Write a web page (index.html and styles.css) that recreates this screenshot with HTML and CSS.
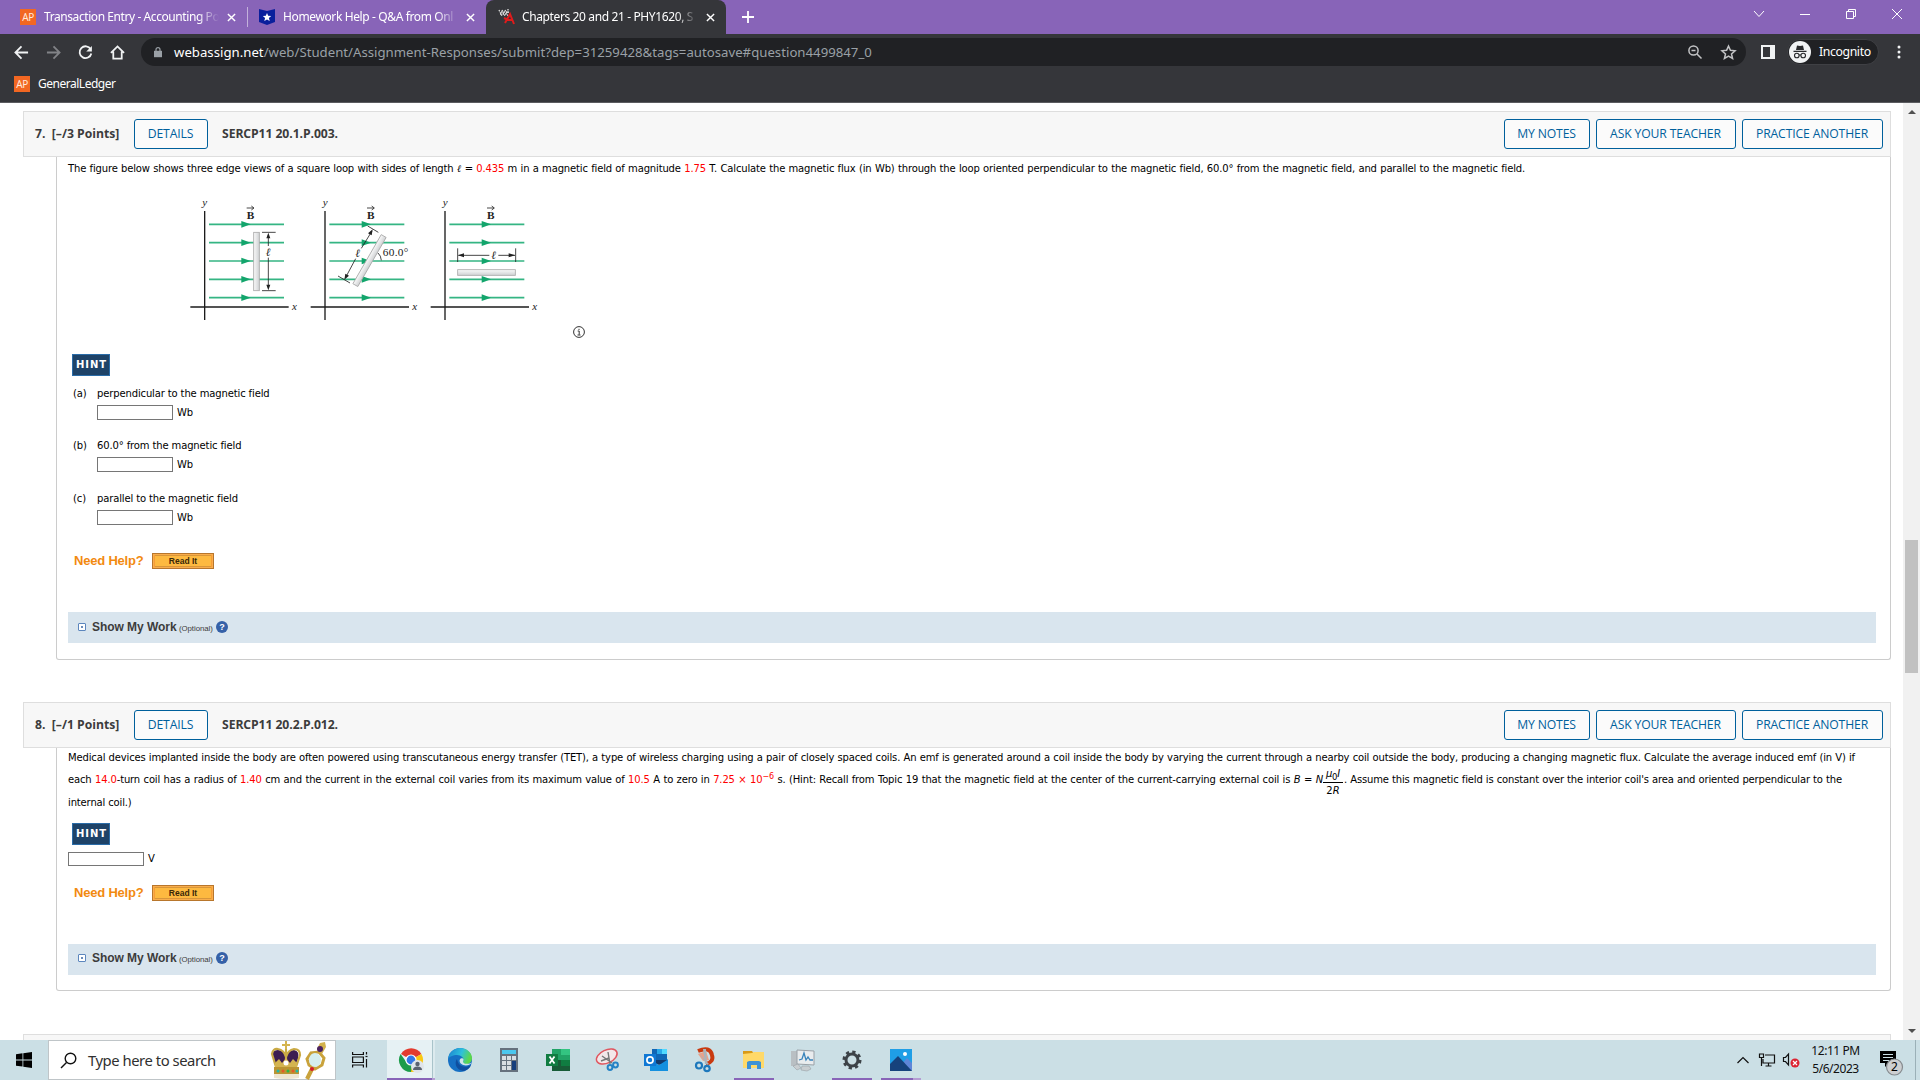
FILE: index.html
```html
<!DOCTYPE html>
<html lang="en">
<head>
<meta charset="utf-8">
<title>Chapters 20 and 21 - PHY1620</title>
<link rel="stylesheet" href="styles.css">
</head>
<body>
<header class="tabs">
  <div class="tab tab-one"><span class="ap">AP</span><span class="tab-title">Transaction Entry - Accounting Po</span><svg class="x" viewBox="0 0 10 10"><path d="M1 1l8 8M9 1l-8 8"/></svg></div>
  <div class="tab tab-two"><svg class="fav" viewBox="0 0 16 16"><path fill="#0a1f9c" d="M0 0l8 2 8-2v13l-8 3-8-3z"/><path fill="#fff" d="M8 4l1.2 2.8 3 .2-2.300 2 .8 3L8 10.400 5.300 12l.8-3-2.300-2 3-.2z"/></svg><span class="tab-title">Homework Help - Q&amp;A from Onl</span><svg class="x" viewBox="0 0 10 10"><path d="M1 1l8 8M9 1l-8 8"/></svg></div>
  <div class="tab tab-active"><svg class="fav" viewBox="0 0 16 16"><path fill="none" stroke="#ddd" stroke-dasharray="1.500 1" stroke-width="1.300" d="M0 1l3 6M3 1l3 6M6 1l3 6M9 0v4M1 5h7M2 3h8"/><path fill="none" stroke="#e01b1b" stroke-width="2" d="M6 14l5-9 4 10M8 11h5M5 9l4 2"/></svg><span class="tab-title">Chapters 20 and 21 - PHY1620, S</span><svg class="x" viewBox="0 0 10 10"><path d="M1 1l8 8M9 1l-8 8"/></svg></div>
  <svg class="plus" viewBox="0 0 12 12"><path d="M6 0v12M0 6h12"/></svg>
  <div class="window-controls">
    <svg viewBox="0 0 12 12"><path d="M1 3l5 5.500L11 3"/></svg>
    <svg viewBox="0 0 12 12"><path d="M1 6.500h10"/></svg>
    <svg viewBox="0 0 12 12"><path d="M1.500 3.500h7v7h-7zM3.500 3V1.500h7v7H9"/></svg>
    <svg viewBox="0 0 12 12"><path d="M1 1l10 10M11 1L1 11"/></svg>
  </div>
</header>
<div class="toolbar">
  <div class="nav">
    <svg viewBox="0 0 16 16"><path d="M15 8H2M8 1.500L1.500 8 8 14.500"/></svg>
    <svg class="dim" viewBox="0 0 16 16"><path d="M1 8h13M8 1.500L14.500 8 8 14.500"/></svg>
    <svg viewBox="0 0 16 16"><path d="M13.500 4.500A6.300 6.300 0 1 0 14.200 9"/><path class="solid" d="M14.800 1v6h-6z"/></svg>
    <svg viewBox="0 0 16 16"><path d="M1 8.500L8 1.500l7 7M3.500 7v7.500h9V7"/></svg>
  </div>
  <div class="omnibox">
    <svg class="lock" viewBox="0 0 10 13"><path fill="none" stroke="#9aa0a6" stroke-width="1.500" d="M2.500 6V3.500a2.500 2.500 0 0 1 5 0V6"/><path fill="#9aa0a6" d="M0 5h10v8H0z"/></svg>
    <span class="url"><b>webassign.net</b>/web/Student/Assignment-Responses/submit?dep=31259428&amp;tags=autosave#question4499847_0</span>
    <svg class="mag" viewBox="0 0 14 14"><circle cx="5.500" cy="5.500" r="4.600"/><path d="M9 9l4.500 4.500M3.500 5.500h4"/></svg>
    <svg class="star" viewBox="0 0 14 14"><path d="M7 1l1.800 4 4.300.4-3.300 2.900 1 4.300L7 10.300l-3.800 2.300 1-4.300L.9 5.400 5.200 5z"/></svg>
  </div>
  <svg class="panel" viewBox="0 0 14 14"><path fill="#f1f3f4" fill-rule="evenodd" d="M0 0h14v14H0zM2 2v10h7V2z"/></svg>
  <div class="incognito"><svg viewBox="0 0 22 22"><circle cx="11" cy="11" r="11" fill="#f1f3f4"/><path fill="#292a2d" d="M7 9l1-4.500 3 .6 3-.6L15 9zM4.500 9.800h13v1.200h-13z"/><g fill="none" stroke="#292a2d" stroke-width="1.100"><circle cx="7.800" cy="14.500" r="2.300"/><circle cx="14.200" cy="14.500" r="2.300"/><path d="M10 14h2"/></g></svg>Incognito</div>
  <svg class="dots" viewBox="0 0 4 14"><circle cx="2" cy="2" r="1.500"/><circle cx="2" cy="7" r="1.500"/><circle cx="2" cy="12" r="1.500"/></svg>
</div>
<div class="bookmarks"><span class="ap">AP</span>GeneralLedger</div>

<div class="viewport">
<main class="page">
  <section class="question q7">
    <div class="q-head">
      <span class="q-num">7.&nbsp; [–/3 Points]</span><span class="btn details">DETAILS</span><span class="q-code">SERCP11 20.1.P.003.</span>
      <span class="btn notes">MY NOTES</span><span class="btn ask">ASK YOUR TEACHER</span><span class="btn practice">PRACTICE ANOTHER</span>
    </div>
    <div class="q-body">
      <p class="line l1">The figure below shows three edge views of a square loop with sides of length <i class="ell">ℓ</i> = <em>0.435</em> m in a magnetic field of magnitude <em>1.75</em> T. Calculate the magnetic flux (in Wb) through the loop oriented perpendicular to the magnetic field, 60.0° from the magnetic field, and parallel to the magnetic field.</p>
      <div class="figure">
        <svg class="diagram" viewBox="0 0 1140 480">
          <defs>
            <linearGradient id="bar" x1="0" x2="1" y1="0" y2="0"><stop offset="0" stop-color="#fafafa"/><stop offset="1" stop-color="#cfd1d3"/></linearGradient>
            <linearGradient id="barh" x1="0" x2="0" y1="0" y2="1"><stop offset="0" stop-color="#fafafa"/><stop offset="1" stop-color="#cfd1d3"/></linearGradient>
            <g id="ray"><path stroke="#35b583" stroke-width="5" d="M0 0h225"/><path fill="#13a56c" d="M97-10l28 10-28 10z"/></g>
            <g id="axes">
              <path stroke="#1c1c1c" stroke-width="4" fill="none" d="M74 78v327M31 366h295"/>
              <use href="#ray" x="87" y="118"/><use href="#ray" x="87" y="173"/><use href="#ray" x="87" y="228"/><use href="#ray" x="87" y="283"/><use href="#ray" x="87" y="338"/>
              <text class="axis" x="67" y="63">y</text><text class="axis" x="336" y="375">x</text>
              <text class="vec" x="200" y="101">B</text>
              <path stroke="#222" stroke-width="2.500" fill="none" d="M200 69h20M214 63l8 6-8 6"/>
            </g>
          </defs>
          <use href="#axes"/><use href="#axes" x="361"/><use href="#axes" x="721"/>
          <rect x="221" y="142" width="17" height="175" fill="url(#bar)" stroke="#aaa" stroke-width="2.500"/>
          <g class="dim-line"><path d="M246 142h41M246 317h41M265 150v33M265 218v90"/><path class="tip" d="M265 143l-6 17h12zM265 316l-6-17h12z"/></g>
          <text class="dim-l" x="257" y="213">ℓ</text>
          <rect x="560" y="142" width="17" height="170" fill="url(#bar)" stroke="#aaa" stroke-width="2.500" transform="rotate(30 569 227)"/>
          <g class="dim-line"><path d="M563 123l32 19M474 273l36 21M576 138L544 190M527 221L496 279M594 204q9 8 10 22"/><path class="tip" d="M578 133l-14 12 11 6zM493 284l3-18 11 6z"/></g>
          <text class="dim-l" x="526" y="216">ℓ</text>
          <text class="angle" x="608" y="213">60.0°</text>
          <g class="dim-line"><path d="M833 190v41M1007 190v41M835 211h93M955 211h50"/><path class="tip" d="M834 211l18-6v12zM1006 211l-20-6v12z"/></g>
          <text class="dim-l" x="934" y="221">ℓ</text>
          <rect x="833" y="254" width="173" height="17" fill="url(#barh)" stroke="#aaa" stroke-width="2.500"/>
        </svg>
        <svg class="info" viewBox="0 0 12 12"><circle cx="6" cy="6" r="5.400"/><path d="M4.700 5h1.500v3.700M4.500 9h3M6 2.800v1.200"/></svg>
      </div>
      <span class="hint">HINT</span>
      <div class="part"><span>(a)</span><div><p>perpendicular to the magnetic field</p><label><input type="text">Wb</label></div></div>
      <div class="part"><span>(b)</span><div><p>60.0° from the magnetic field</p><label><input type="text">Wb</label></div></div>
      <div class="part"><span>(c)</span><div><p>parallel to the magnetic field</p><label><input type="text">Wb</label></div></div>
      <div class="help"><span>Need Help?</span><span class="read">Read It</span></div>
      <div class="work"><span class="expand"></span><b>Show My Work</b><small>(Optional)</small><span class="qmark">?</span></div>
    </div>
  </section>

  <section class="question q8">
    <div class="q-head">
      <span class="q-num">8.&nbsp; [–/1 Points]</span><span class="btn details">DETAILS</span><span class="q-code">SERCP11 20.2.P.012.</span>
      <span class="btn notes">MY NOTES</span><span class="btn ask">ASK YOUR TEACHER</span><span class="btn practice">PRACTICE ANOTHER</span>
    </div>
    <div class="q-body">
      <p class="line l2">Medical devices implanted inside the body are often powered using transcutaneous energy transfer (TET), a type of wireless charging using a pair of closely spaced coils. An emf is generated around a coil inside the body by varying the current through a nearby coil outside the body, producing a changing magnetic flux. Calculate the average induced emf (in V) if</p>
      <div class="row">
        <p class="line l3">each <em>14.0</em>-turn coil has a radius of <em>1.40</em> cm and the current in the external coil varies from its maximum value of <em>10.5</em> A to zero in <em>7.25 × 10<sup>−6</sup></em> s. (Hint: Recall from Topic 19 that the magnetic field at the center of the current-carrying external coil is <i>B</i> = <i>N</i></p>
        <span class="frac"><span><i>μ</i><sub>0</sub><i>I</i></span><span>2<i>R</i></span></span>
        <p class="line l4">. Assume this magnetic field is constant over the interior coil's area and oriented perpendicular to the</p>
      </div>
      <p class="line l5">internal coil.)</p>
      <span class="hint">HINT</span>
      <label class="answer"><input type="text">V</label>
      <div class="help"><span>Need Help?</span><span class="read">Read It</span></div>
      <div class="work"><span class="expand"></span><b>Show My Work</b><small>(Optional)</small><span class="qmark">?</span></div>
    </div>
  </section>
  <section class="question"><div class="q-head"></div></section>
</main>
<div class="scrollbar"><span class="up"></span><span class="thumb"></span><span class="down"></span></div>
</div>

<footer class="taskbar">
  <div class="start"><svg viewBox="0 0 16 16"><path d="M0 2.300L6.500 1.300v6.200H0zM7.300 1.200L16 0v7.500H7.300zM0 8.400h6.500v6.200L0 13.700zM7.300 8.400H16V16l-8.700-1.200z"/></svg></div>
  <div class="search">
    <svg class="lens" viewBox="0 0 17 17"><circle cx="10.500" cy="6.500" r="5.300"/><path d="M6.500 10.500L1 16"/></svg>
    <span>Type here to search</span>
    <svg class="crown" viewBox="0 0 56 38">
      <path fill="#3d1d52" d="M2 16q-2-7 5-7 6 0 8 6 2-6 8-6 6 1 4 9l-3 7H5z"/>
      <path fill="none" stroke="#c9a944" stroke-width="2.200" d="M5 26L1 13q1-6 6-5 6 1 8 8 2-7 8-8 6 0 6 6l-4 12M15 8v18"/>
      <path fill="#d4b450" d="M14 0h2v3h3v2h-3v3h-2V5h-3V3h3zM4 22l4-4 3 4 4-5 4 5 3-4 4 4v7H4z"/>
      <path fill="#bb9432" d="M3 26h25v7H3z"/><path fill="#eee6d0" d="M3 33h25v4q-12 2-25 0z"/>
      <circle cx="7" cy="30" r="1.500" fill="#22b8a8"/><circle cx="12" cy="30" r="1.500" fill="#e35a2a"/><circle cx="17" cy="30" r="1.500" fill="#2bb54a"/><circle cx="22" cy="30" r="1.500" fill="#e35a2a"/><circle cx="26" cy="30" r="1.500" fill="#22b8a8"/><circle cx="15" cy="22" r="2.500" fill="#fff"/>
      <path stroke="#c9a23b" stroke-width="4" d="M43 24l-7 14"/><path fill="none" stroke="#c9a23b" stroke-width="3" d="M38 24l-2-6 4-6 8-1 5 6-2 7-7 4z"/><ellipse cx="44" cy="19" rx="6" ry="7" fill="#d5eeee"/><path fill="#d3b24c" d="M46 8l3-6 5-1 1 5-4 7z"/><circle cx="49" cy="8" r="3" fill="#4b2362"/><circle cx="41" cy="28" r="2" fill="#d51b2c"/>
    </svg>
  </div>
  <div class="taskview"><svg viewBox="0 0 16 16"><path d="M.6 0v2.500h10.800V0M.6 15.500V13h10.800v2.500M.6 5h10.800v5.500H.6zM14.500 0v2.500M14.500 7v8.500"/><path d="M13.500 4.500h2"/></svg></div>
  <div class="apps">
    <div class="app current"><svg viewBox="0 0 24 24"><path fill="#e33b2e" d="M12 12L2 6A12 12 0 0 1 22.400 6z"/><path fill="#f9c813" d="M12 12l10.400-6A12 12 0 0 1 12 24z"/><path fill="#1c9c4b" d="M12 24A12 12 0 0 1 1.600 6L8 15l5 2z"/><circle cx="12" cy="12" r="5.600" fill="#fff"/><circle cx="12" cy="12" r="4.400" fill="#3478e5"/><circle cx="18.500" cy="18.500" r="6.500" fill="#dfe4ea"/><circle cx="18.500" cy="16" r="2.200" fill="#5a6270"/><path fill="#5a6270" d="M14 22q0-3.500 4.500-3.500T23 22z"/></svg></div>
    <div class="app"><svg viewBox="0 0 24 24"><defs><linearGradient id="edge" x1="0" y1="0" x2="1" y2="0.300"><stop offset="0" stop-color="#1a7fd0"/><stop offset=".6" stop-color="#2ec0dc"/><stop offset="1" stop-color="#5bd84b"/></linearGradient></defs><circle cx="12" cy="12" r="12" fill="#1670c4"/><path fill="url(#edge)" d="M0 11C1 3.500 7 0 12 0c7 0 12 5 12 10 0 4-3 6-6 6-2.500 0-4-1-3-2.500C17 10 13 7 9 7c-4 0-8 2-9 4z"/><path fill="#0f4fa0" d="M9 11c-3 4-1 11 6 12 4-.5 7-3 8-6-4 2.500-9 2.500-12-1-1-1.500-1.500-3-2-5z"/><path fill="#cfe4ea" d="M23.700 14.500c-2 3.500-8 4-11 1-1.500-1.500-1.500-4 0-5 3-.8 3.500 1 2.300 3 0 1.500 2 2.500 4 2.300 2 0 3.500-.6 4.700-1.300z"/></svg></div>
    <div class="app"><svg viewBox="0 0 24 24"><path fill="#66727e" d="M3 0h18v24H3z"/><path fill="#4cc7ee" d="M5 2h14v4H5z"/><path fill="#d9dee2" d="M5 8h4v4H5zM10 8h4v4h-4zM15 8h4v4h-4zM5 13h4v4H5zM10 13h4v4h-4zM5 18h4v4H5zM10 18h4v4h-4z"/><path fill="#173f7c" d="M15 13h4v9h-4z"/></svg></div>
    <div class="app"><svg viewBox="0 0 24 24"><path fill="#21a366" d="M6 1h18v22H6z"/><path fill="#33c481" d="M15 1h9v6h-9z"/><path fill="#107c41" d="M15 12h9v6h-9z"/><path fill="#185c37" d="M6 12h9v6h9v5H6z"/><path fill="#107c41" d="M0 6h12v12H0z"/><path stroke="#fff" stroke-width="1.800" d="M3.500 8.500l5 7M8.500 8.500l-5 7"/></svg></div>
    <div class="app"><svg viewBox="0 0 24 24"><ellipse cx="12" cy="8.500" rx="11" ry="6.500" fill="#f3e7e9" stroke="#e0565f" stroke-width="1.500" transform="rotate(-25 12 9)"/><path stroke="#777" stroke-width="1.400" d="M7 8l10 7M13 4l2 12M6 13l8-3"/><g fill="none" stroke="#2482c5" stroke-width="2"><circle cx="15" cy="19.500" r="2.400"/><circle cx="20.500" cy="17" r="2.400"/></g></svg></div>
    <div class="app"><svg viewBox="0 0 24 24"><path fill="#1066b5" d="M8 1h15v15H8z"/><path fill="#28a8ea" d="M13 1h5v5h-5z"/><path fill="#50d9ff" d="M18 1h5v5h-5z"/><path fill="#1490df" d="M6 12l9 5 9-6v12H6z"/><path fill="#123b6d" d="M8 12h15l-8 5z"/><path fill="#0f78d4" d="M0 6h12v12H0z"/><circle cx="6" cy="12" r="3.100" fill="none" stroke="#fff" stroke-width="1.700"/></svg></div>
    <div class="app"><svg viewBox="0 0 24 24"><path fill="none" stroke="#c93a10" stroke-width="4" d="M5 3q12-5 14 4 2 7-6 9"/><path fill="#eaa28b" d="M5 6l8-3 3 9-6 1z"/><path fill="#aab4bc" d="M10 1l2 15 2 0L13 1zM6 5l8 12 2-1z"/><g fill="none" stroke="#1d78bc" stroke-width="2.200"><circle cx="6" cy="17.500" r="3"/><circle cx="14" cy="20.500" r="2.700"/></g></svg></div>
    <div class="app open"><svg viewBox="0 0 24 24"><path fill="#d99a17" d="M1 3h9l2 3H1z"/><path fill="#ffd969" d="M1 6l9-1 2-1h10v16H1z"/><path fill="#3e92d5" d="M5 20v-6l2-1h10l2 1v7h-4v-4H9v4H5z"/></svg></div>
    <div class="app"><svg viewBox="0 0 24 24"><path fill="#b9bfc3" d="M0 3h8v15H0z"/><path fill="#e9ecee" stroke="#9aa1a7" d="M6 2l17 1v14L6 16z"/><path fill="none" stroke="#3883bb" stroke-width="1.300" d="M8 12l3-1 2-6 2 7 2-3 2 3h3"/><path fill="#c9ced1" stroke="#999fa4" stroke-width=".6" d="M2 18l5-2 3 4-4 2zM11 18h7l2 3-4 2-6-1z"/></svg></div>
    <div class="app open"><svg viewBox="0 0 24 24"><circle cx="12" cy="12" r="6" fill="none" stroke="#3d4348" stroke-width="3"/><circle cx="12" cy="12" r="8" fill="none" stroke="#3d4348" stroke-width="3" stroke-dasharray="3.200 3.083"/></svg></div>
    <div class="app open multi"><svg viewBox="0 0 24 24"><path fill="#1f9ee6" d="M1 1h22v22H1z"/><path fill="#5f86d8" d="M12 17l6-7 5 5v8H12z"/><path fill="#16427c" d="M1 16l8-8 14 15H1z"/><circle cx="16" cy="6" r="2" fill="#fff"/></svg></div>
  </div>
  <div class="tray">
    <svg class="chev" viewBox="0 0 12 8"><path d="M.5 7L6 1.500 11.500 7"/></svg>
    <svg class="net" viewBox="0 0 16 14"><path d="M6 2h9.500v8H4V6M6.500 13h6M9.500 10v3M.5 1h4v3.500h-4zM2.500 5v8"/></svg>
    <svg class="vol" viewBox="0 0 17 16"><path d="M.5 5.500h2l3-3.500v11l-3-3.500h-2z"/><circle cx="12" cy="11" r="4.500" fill="#dc2433" stroke="none"/><path stroke="#fff" d="M10 9l4 4M14 9l-4 4"/></svg>
    <div class="clock"><span>12:11 PM</span><span>5/6/2023</span></div>
    <div class="notif"><svg viewBox="0 0 24 24"><path d="M0 0h16v12H9l-4 4v-4H0z"/><path stroke="#cbdfe5" d="M3 3.500h10M3 6.500h10M3 9.500h6"/><circle cx="14.500" cy="16" r="8" fill="#cdcfd1" stroke="#858a8e"/></svg><span>2</span></div>
  </div>
</footer>
</body>
</html>
```
FILE: styles.css
```css
* { box-sizing: border-box; }
body { margin: 0; width: 1920px; height: 1080px; overflow: hidden; display: flex; flex-direction: column; background: #fff; font: 10px/14px "DejaVu Sans", Verdana, sans-serif; color: #000; }
svg { display: block; flex: none; overflow: visible; }
p { margin: 0; }
.tabs { height: 34px; background: #8864b8; display: flex; align-items: flex-start; color: #fff; font: 12px/28px "Noto Sans", sans-serif; letter-spacing: -.38px; flex: none; }
.tab { height: 34px; display: flex; align-items: center; position: relative; }
.tab-one { width: 248px; padding-left: 20px; }
.tab-one::after { content: ""; position: absolute; right: 0; top: 7px; height: 20px; width: 1px; background: #c3b1db; }
.tab-one .tab-title { letter-spacing: -.42px; }
.tab-two { width: 238px; padding-left: 11px; }
.tab-active { width: 240px; padding-left: 13px; background: #35363a; border-radius: 8px 8px 0 0; }
.ap { width: 16px; height: 16px; background: #f26722; color: #ffe9dc; font: 10px/16px "Noto Sans", sans-serif; letter-spacing: -.4px; text-align: center; flex: none; }
.fav { width: 16px; height: 16px; }
.tab-title { width: 175px; margin-left: 8px; overflow: hidden; white-space: nowrap; -webkit-mask-image: linear-gradient(90deg, #000 88%, transparent); mask-image: linear-gradient(90deg, #000 88%, transparent); }
.tab-active .tab-title { margin-left: 7px; }
.x { width: 9px; height: 9px; margin-left: 8px; fill: none; stroke: #fff; stroke-width: 1.600; }
.tab-active .x { margin-left: 9px; }
.plus { width: 12px; height: 12px; margin: 11px 0 0 16px; stroke: #fff; stroke-width: 1.800; }
.window-controls { margin: 8px 17px 0 auto; display: flex; gap: 34px; }
.window-controls svg { width: 12px; height: 12px; fill: none; stroke: #fff; stroke-width: 1; }
.toolbar { height: 36px; background: #35363a; display: flex; align-items: center; flex: none; }
.nav { display: flex; gap: 17px; padding-left: 14px; width: 141px; }
.nav svg { width: 15px; height: 15px; fill: none; stroke: #f1f3f4; stroke-width: 1.900; }
.nav .dim { stroke: #828387; }
.nav .solid { fill: #f1f3f4; stroke: none; }
.omnibox { width: 1605px; height: 28px; background: #202124; border-radius: 14px; display: flex; align-items: center; padding-left: 13px; font: 13.200px/28px "Noto Sans", sans-serif; color: #9aa0a6; }
.lock { width: 8px; height: 12px; margin-right: 12px; }
.url { width: 700px; white-space: nowrap; letter-spacing: .01px; }
.url b { font-weight: 400; color: #fff; }
.mag { width: 14px; height: 14px; margin-left: auto; fill: none; stroke: #c2c3c5; stroke-width: 1.500; }
.star { width: 15px; height: 15px; margin: 0 10px 0 19px; fill: none; stroke: #c2c3c5; stroke-width: 1.400; }
.panel { width: 14px; height: 14px; margin-left: 15px; }
.incognito { width: 92px; height: 26px; margin-left: 12px; background: #202124; border: 1px solid #3f4044; border-radius: 13px; display: flex; align-items: center; color: #fff; font: 12.300px/24px "Noto Sans", sans-serif; letter-spacing: -.4px; }
.incognito svg { width: 22px; height: 22px; margin: 0 8px 0 1px; }
.dots { width: 4px; height: 14px; margin-left: 18px; fill: #f1f3f4; }
.bookmarks { height: 33px; flex: none; background: #35363a; border-bottom: 1px solid #5b5c60; display: flex; align-items: center; gap: 8px; padding: 0 0 4px 14px; color: #fff; font: 12px/28px "Noto Sans", sans-serif; letter-spacing: -.48px; }
.viewport { height: 937px; display: flex; }
.page { width: 1903px; height: 937px; overflow: hidden; padding: 8px 12px 0 23px; }
.scrollbar { width: 17px; background: #f1f1f1; display: flex; flex-direction: column; align-items: center; }
.up, .down { border: 4px solid transparent; }
.up { border-bottom-color: #505050; margin-top: 3px; }
.down { border-top-color: #505050; margin-top: 356px; }
.thumb { width: 13px; height: 133px; margin-top: 426px; background: #c1c1c1; }
.q-head { height: 46px; background: #f7f7f7; border: 1px solid #dedede; display: flex; align-items: center; padding: 0 7px 0 11px; font: 700 12.200px/28px "Open Sans", "Noto Sans", sans-serif; color: #3c3c3c; white-space: nowrap; }
.q-num { width: 99px; }
.btn { height: 30px; padding-right: 1px; border: 1px solid #00609c; border-radius: 3px; color: #00609c; font-weight: 400; background: #fbfbfb; text-align: center; letter-spacing: -.14px; }
.details { width: 74px; }
.q-code { margin: 0 auto 0 14px; letter-spacing: -.08px; }
.notes { width: 86px; margin-right: 6px; }
.ask { width: 140px; margin-right: 6px; }
.practice { width: 141px; }
.q-body { margin-left: 33px; border: 1px solid #ccc; border-top: 0; border-radius: 0 0 3px 3px; padding: 5px 0 0 11px; }
.q7 .q-body { height: 503px; }
.q8 { margin-top: 42px; }
.q8 .q-body { height: 243px; padding-top: 3px; }
.q8 + .question { margin-top: 43px; }
.line { white-space: nowrap; letter-spacing: -.15px; text-align-last: justify; height: 14px; }
.line em { font-style: normal; color: #f00; }
.line sup { font-size: 8px; line-height: 0; vertical-align: 4px; }
.ell { font-family: "DejaVu Serif", serif; }
.l1 { width: 1457px; }
.figure { height: 171px; display: flex; padding: 9px 0 0 112px; }
.diagram { width: 380px; height: 160px; }
.diagram text { font-family: "Liberation Serif", serif; fill: #222; }
.diagram .axis { font-size: 33px; font-style: italic; }
.diagram .vec { font-size: 34px; font-weight: 700; }
.diagram .dim-l { font-size: 34px; font-family: "DejaVu Serif", serif; font-style: italic; }
.diagram .angle { font-size: 34px; letter-spacing: 1px; }
.dim-line path { fill: none; stroke: #222; stroke-width: 2.500; }
.dim-line .tip { fill: #222; stroke: none; }
.info { width: 12px; height: 12px; margin: 141px 0 0 13px; fill: none; stroke: #333; stroke-width: 1; }
.hint { display: block; width: 38px; height: 22px; margin-left: 4px; background: #1e4368; border: 1px solid #2a6ca8; color: #fff; font: 700 10px/19px "DejaVu Sans", Verdana, sans-serif; letter-spacing: .9px; text-align: center; padding-left: 1px; }
.q7 .hint { margin-top: 7px; }
.part { display: flex; height: 53px; padding-left: 5px; letter-spacing: -.13px; }
.part > span { width: 24px; }
.hint + .part { height: 52px; margin-top: 11px; }
.part label { display: flex; align-items: flex-start; height: 15px; margin-top: 4px; line-height: 15px; }
input { width: 76px; height: 15px; padding: 0; border: 1px solid #767676; background: #fff; margin: 0 4px 0 0; }
.help { display: flex; align-items: center; gap: 8px; height: 16px; padding-left: 6px; color: #f28a10; font: 700 13px/16px "Liberation Sans", Arial, sans-serif; }
.help span:first-child { width: 70px; white-space: nowrap; letter-spacing: -.2px; }
.read { width: 62px; height: 16px; background: #fdb940; border: 1px solid #b8762c; box-shadow: inset 0 0 0 1px #f9ad4c, inset 2px 0 #f79d36, inset -2px 0 #f79d36, inset 0 0 0 2px #d8963a; color: #382808; text-align: center; font-size: 8.500px; line-height: 15px; }
.q7 .help { margin-top: 8px; }
.work { width: 1808px; height: 31px; background: #d9e5ee; display: flex; align-items: center; padding: 0 0 1px 10px; font: 12px/20px "Liberation Sans", Arial, sans-serif; color: #3c3c3c; margin-top: 43px; }
.q8 .work { padding-bottom: 3px; }
.expand { width: 8px; height: 8px; border: 1px solid #5c86bd; border-radius: 1px; background: linear-gradient(#6b8cb8, #6b8cb8) center / 2px 2px no-repeat #fff; margin-right: 6px; }
.work b { width: 87px; letter-spacing: -.05px; }
.work small { width: 37px; font-size: 7.800px; padding-top: 3px; white-space: nowrap; letter-spacing: -.05px; }
.qmark { width: 12px; height: 12px; border-radius: 50%; background: #3561a8; color: #fff; font: 700 9px/12px "Liberation Sans", Arial, sans-serif; text-align: center; }
.l2 { width: 1787px; }
.row { display: flex; height: 30px; padding-top: 8px; }
.l3 { width: 1255px; }
.l4 { width: 498px; margin-left: 1px; }
.l5 { text-align-last: left; width: 200px; margin-top: 1px; }
.frac { width: 20px; height: 33px; margin-top: -8px; display: flex; flex-direction: column; text-align: center; line-height: 13px; }
.frac span:first-child { height: 18px; border-bottom: 1px solid #000; padding-top: 2px; white-space: nowrap; letter-spacing: -.2px; }
.frac span:last-child { line-height: 15px; }
.frac sub { font-size: 8.500px; line-height: 0; }
.q8 .hint { margin-top: 13px; }
.answer { display: flex; align-items: center; height: 14px; margin-top: 7px; }
.answer input { height: 14px; }
.q8 .help { margin-top: 19px; }
.taskbar { height: 40px; background: #cbdfe5; display: flex; align-items: center; flex: none; font-family: "Noto Sans", sans-serif; }
.start { width: 48px; padding-left: 16px; }
.start svg { width: 16px; height: 16px; }
.search { width: 288px; height: 40px; background: #fff; border: 1px solid #bfc5c8; display: flex; align-items: center; padding-left: 11px; font-size: 14.800px; color: #303030; letter-spacing: -.45px; }
.lens { width: 17px; height: 17px; margin-right: 11px; fill: none; stroke: #111; stroke-width: 1.400; }
.search span { width: 183px; white-space: nowrap; }
.crown { width: 56px; height: 38px; }
.taskview { width: 50px; padding-left: 16px; }
.taskview svg, .tray svg { fill: none; stroke: #111; stroke-width: 1.200; }
.taskview svg { width: 16px; height: 16px; }
.apps { display: flex; }
.app { width: 49px; height: 40px; padding: 8px 0 0 13px; position: relative; }
.app svg { width: 24px; height: 24px; }
.app.current { background: linear-gradient(90deg, #e6f1f4 45px, #a9c3ca 45px, #a9c3ca 46px, #dceaee 46px) 1px 0 / 48px 40px no-repeat; }
.open::after, .current::after { content: ""; position: absolute; bottom: 0; left: 5px; width: 40px; height: 2px; background: #8864b8; }
.current::after { left: 1px; width: 48px; background: linear-gradient(90deg, #8864b8 45px, #b59dd3 45px); }
.multi::after { background: linear-gradient(90deg, #8864b8 32px, #b59dd3 32px); }
.tray { display: flex; align-items: center; margin-left: auto; height: 40px; padding-right: 16px; position: relative; }
.tray::after { content: ""; position: absolute; right: 4px; top: 0; width: 1px; height: 40px; background: #9bb0b7; }
.chev { width: 12px; height: 8px; margin-right: 10px; }
.net { width: 16px; height: 14px; margin-right: 8px; }
.vol { width: 17px; height: 16px; margin-right: 11px; }
.clock { width: 49px; margin-right: 20px; display: flex; flex-direction: column; align-items: center; font-size: 12px; line-height: 18px; letter-spacing: -.45px; white-space: nowrap; color: #111; }
.notif { width: 24px; height: 24px; margin-top: 6px; position: relative; }
.notif svg { width: 24px; height: 24px; }
.tray .notif svg path:first-child { fill: #000; stroke: none; }
.notif span { position: absolute; left: 7px; top: 8px; width: 15px; text-align: center; font-size: 12px; line-height: 16px; }
```
